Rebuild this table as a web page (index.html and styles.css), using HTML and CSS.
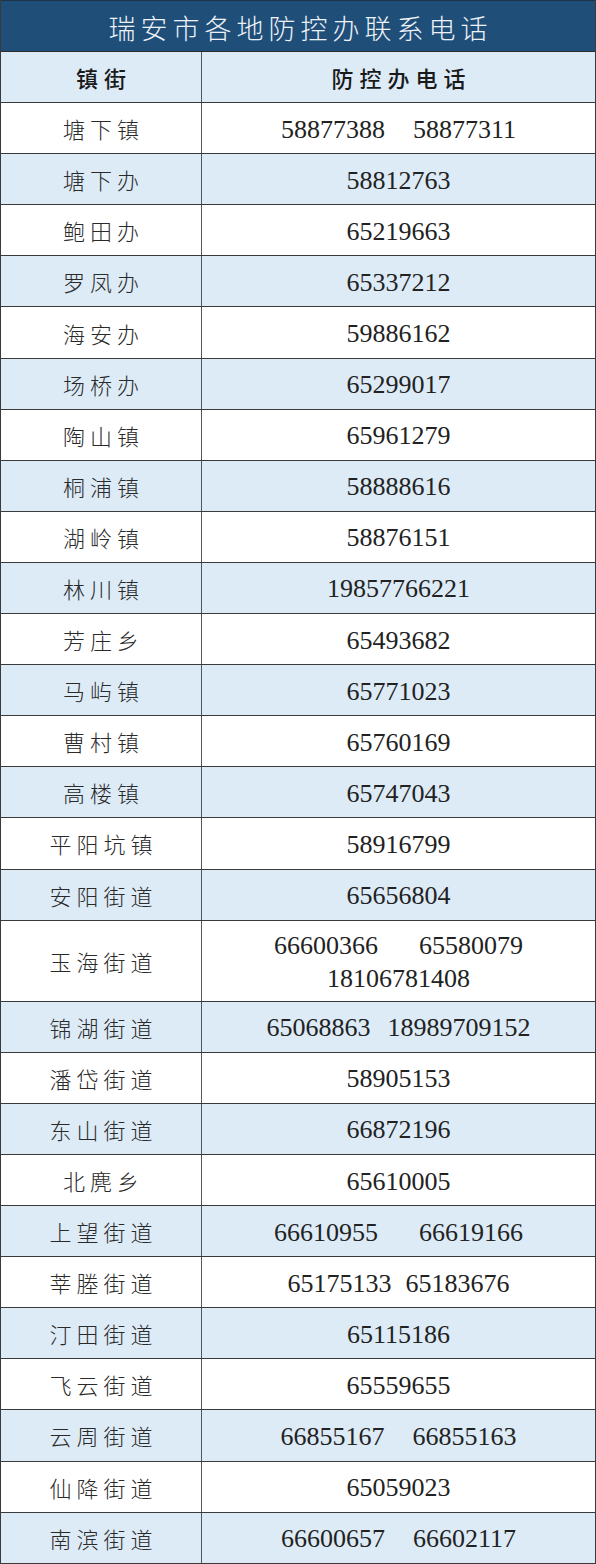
FILE: index.html
```html
<!DOCTYPE html>
<html lang="zh-CN">
<head>
<meta charset="utf-8">
<title>瑞安市各地防控办联系电话</title>
<link rel="stylesheet" href="styles.css">
</head>
<body>
<div class="sheet">
  <div class="title">瑞安市各地防控办联系电话</div>
  <div class="row head"><div class="c1">镇街</div><div class="c2 cn">防控办电话</div></div>
  <div class="row"><div class="c1">塘下镇</div><div class="c2"><span>58877388</span><span class="g28">58877311</span></div></div>
  <div class="row"><div class="c1">塘下办</div><div class="c2"><span>58812763</span></div></div>
  <div class="row"><div class="c1">鲍田办</div><div class="c2"><span>65219663</span></div></div>
  <div class="row"><div class="c1">罗凤办</div><div class="c2"><span>65337212</span></div></div>
  <div class="row"><div class="c1">海安办</div><div class="c2"><span>59886162</span></div></div>
  <div class="row"><div class="c1">场桥办</div><div class="c2"><span>65299017</span></div></div>
  <div class="row"><div class="c1">陶山镇</div><div class="c2"><span>65961279</span></div></div>
  <div class="row"><div class="c1">桐浦镇</div><div class="c2"><span>58888616</span></div></div>
  <div class="row"><div class="c1">湖岭镇</div><div class="c2"><span>58876151</span></div></div>
  <div class="row"><div class="c1">林川镇</div><div class="c2"><span>19857766221</span></div></div>
  <div class="row"><div class="c1">芳庄乡</div><div class="c2"><span>65493682</span></div></div>
  <div class="row"><div class="c1">马屿镇</div><div class="c2"><span>65771023</span></div></div>
  <div class="row"><div class="c1">曹村镇</div><div class="c2"><span>65760169</span></div></div>
  <div class="row"><div class="c1">高楼镇</div><div class="c2"><span>65747043</span></div></div>
  <div class="row"><div class="c1">平阳坑镇</div><div class="c2"><span>58916799</span></div></div>
  <div class="row"><div class="c1">安阳街道</div><div class="c2"><span>65656804</span></div></div>
  <div class="row tall"><div class="c1">玉海街道</div><div class="c2 stack"><div class="line"><span>66600366</span><span class="g41">65580079</span></div><div class="line"><span>18106781408</span></div></div></div>
  <div class="row"><div class="c1">锦湖街道</div><div class="c2"><span>65068863</span><span class="g17">18989709152</span></div></div>
  <div class="row"><div class="c1">潘岱街道</div><div class="c2"><span>58905153</span></div></div>
  <div class="row"><div class="c1">东山街道</div><div class="c2"><span>66872196</span></div></div>
  <div class="row"><div class="c1">北麂乡</div><div class="c2"><span>65610005</span></div></div>
  <div class="row"><div class="c1">上望街道</div><div class="c2"><span>66610955</span><span class="g41">66619166</span></div></div>
  <div class="row"><div class="c1">莘塍街道</div><div class="c2"><span>65175133</span><span class="g14">65183676</span></div></div>
  <div class="row"><div class="c1">汀田街道</div><div class="c2"><span>65115186</span></div></div>
  <div class="row"><div class="c1">飞云街道</div><div class="c2"><span>65559655</span></div></div>
  <div class="row"><div class="c1">云周街道</div><div class="c2"><span>66855167</span><span class="g28">66855163</span></div></div>
  <div class="row"><div class="c1">仙降街道</div><div class="c2"><span>65059023</span></div></div>
  <div class="row"><div class="c1">南滨街道</div><div class="c2"><span>66600657</span><span class="g28">66602117</span></div></div>
</div>
</body>
</html>
```
FILE: styles.css
```css
html, body {
  margin: 0;
  padding: 0;
  background: #ffffff;
}

.sheet {
  width: 596px;
  box-sizing: border-box;
  border-left: 1px solid #3a3a3a;
  border-right: 1px solid #3a3a3a;
  color: #262626;
}

.title {
  height: 52px;
  box-sizing: border-box;
  border-top: 1px solid #203246;
  border-bottom: 1px solid #2c2c2c;
  background: #1f4e79;
  color: #eef2f7;
  font-family: "Noto Sans CJK SC", sans-serif;
  font-weight: 300;
  font-size: 27px;
  letter-spacing: 5px;
  padding: 2px 0 0 5px;
  display: flex;
  align-items: center;
  justify-content: center;
}

.row {
  display: grid;
  grid-template-columns: 201px 1fr;
  height: 51.1px;
  box-sizing: border-box;
  border-bottom: 1px solid #3a3a3a;
  background: #ffffff;
}

.row:nth-child(even) {
  background: #ddebf7;
}

.row.tall {
  height: 81.1px;
}

.c1 {
  border-right: 1px solid #555555;
  display: flex;
  align-items: center;
  justify-content: center;
  font-family: "Noto Sans CJK SC", sans-serif;
  font-weight: 300;
  font-size: 22px;
  letter-spacing: 5px;
  padding-left: 5px;
  color: #2a2a2a;
}

.c2 {
  display: flex;
  align-items: center;
  justify-content: center;
  font-family: "Liberation Serif", serif;
  font-size: 26px;
  padding-top: 3px;
  color: #222222;
}

.head .c1,
.head .c2 {
  font-family: "Noto Sans CJK SC", sans-serif;
  font-weight: 500;
  font-size: 22px;
  letter-spacing: 6px;
  padding-left: 6px;
  padding-top: 0;
  color: #1a1a1a;
}

.stack {
  flex-direction: column;
  padding-top: 2px;
}

.line {
  display: flex;
  justify-content: center;
  line-height: 33px;
}

.g14 { margin-left: 14px; }
.g17 { margin-left: 17px; }
.g28 { margin-left: 28px; }
.g41 { margin-left: 41px; }
```
